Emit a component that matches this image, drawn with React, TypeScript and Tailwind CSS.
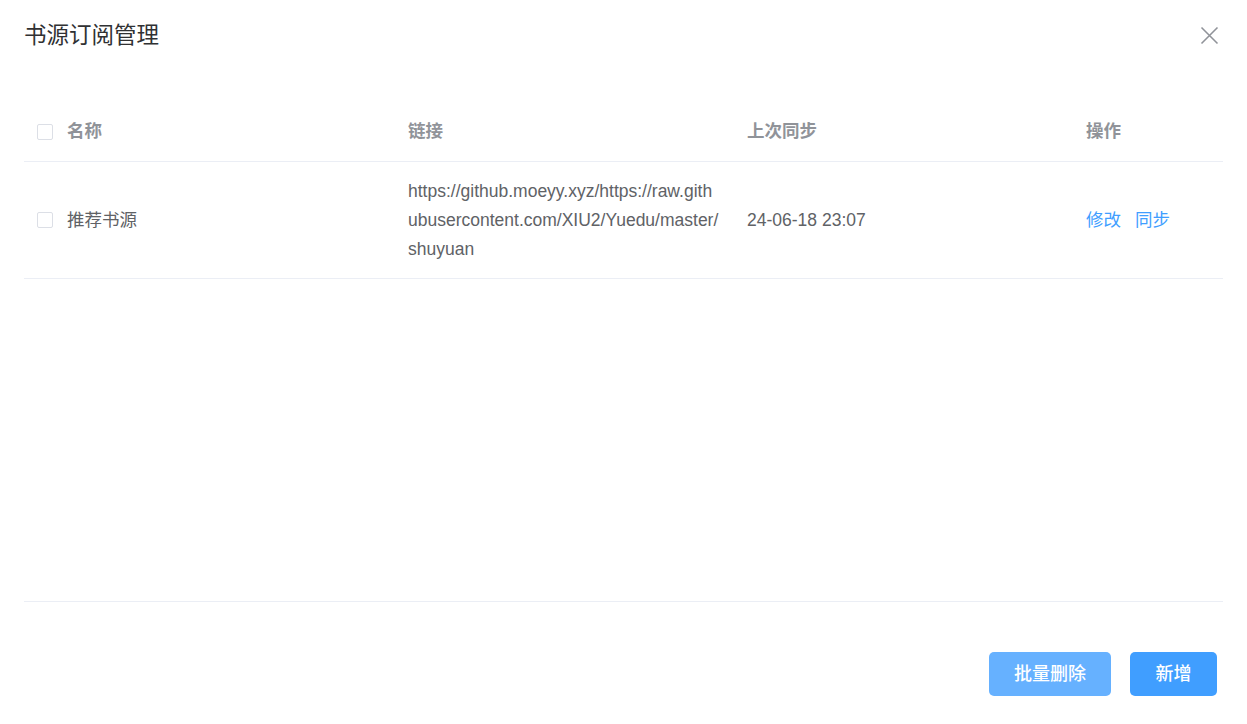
export default function App() {
  const font = { fontFamily: '"Liberation Sans", Arial, "Noto Sans CJK SC", sans-serif' };

  return (
    <div className="w-[1247px] h-[724px] bg-white relative" style={font}>
      {/* header */}
      <div className="flex items-center justify-between pl-6 pr-7 pt-[20px] h-[52px]">
        <h2 className="text-[22.5px] leading-[32px] text-[#303133]">书源订阅管理</h2>
        <button className="text-[#909399] -mt-[2px]">
          <svg width="19" height="19" viewBox="0 0 19 19" fill="none" stroke="currentColor" strokeWidth="1.6">
            <path d="M1.5 1.5 L17.5 17.5 M17.5 1.5 L1.5 17.5" />
          </svg>
        </button>
      </div>

      {/* table */}
      <div className="mx-6 mt-[50px] h-[500px] border-b border-[#ebeef5]">
        <div className="grid grid-cols-[31px_341px_339px_339px_149px] border-b border-[#ebeef5] text-[17.5px] leading-[29px] font-bold text-[#909399]">
          <div className="py-[15px] pl-[13px] flex items-center">
            <span className="w-[16px] h-[16px] border border-[#dcdfe6] rounded-[2px] bg-white" />
          </div>
          <div className="py-[15px] px-3">名称</div>
          <div className="py-[15px] px-3">链接</div>
          <div className="py-[15px] px-3">上次同步</div>
          <div className="py-[15px] px-3">操作</div>
        </div>

        <div className="grid grid-cols-[31px_341px_339px_339px_149px] items-center border-b border-[#ebeef5] text-[17.5px] leading-[29px] text-[#606266]">
          <div className="pl-[13px] flex items-center">
            <span className="w-[16px] h-[16px] border border-[#dcdfe6] rounded-[2px] bg-white" />
          </div>
          <div className="px-3">推荐书源</div>
          <div className="pt-[15px] pb-[14px] pl-3 pr-[15px] break-all">
            https://github.moeyy.xyz/https://raw.githubusercontent.com/XIU2/Yuedu/master/shuyuan
          </div>
          <div className="px-3">24-06-18 23:07</div>
          <div className="px-3 flex gap-[14px] text-[#409eff]">
            <span>修改</span>
            <span>同步</span>
          </div>
        </div>
      </div>

      {/* footer */}
      <div className="flex justify-end gap-[19px] pr-[30px] mt-[50px]">
        <button className="w-[122px] h-[44px] rounded-[5px] bg-[#66b1ff] text-white text-[18px] font-medium">批量删除</button>
        <button className="w-[87px] h-[44px] rounded-[5px] bg-[#409eff] text-white text-[18px] font-medium">新增</button>
      </div>
    </div>
  );
}
